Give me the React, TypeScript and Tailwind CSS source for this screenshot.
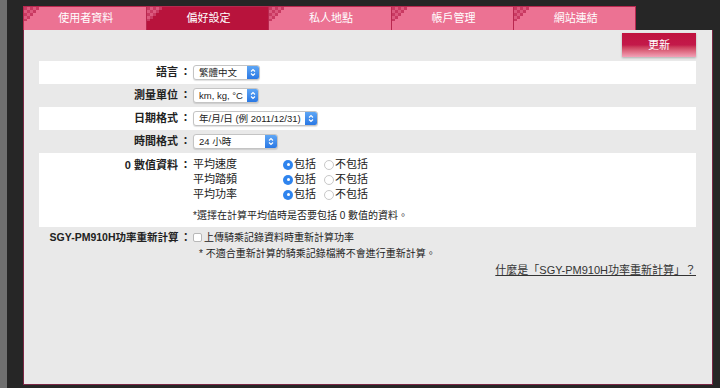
import React from 'react';

const FONT = { fontFamily: '"Liberation Sans", "Noto Sans CJK TC", sans-serif' };

const Checker: React.FC = () => (
  <svg width="16" height="14" viewBox="0 0 16 14" className="absolute left-0 top-0">
    {[
      [0, 0], [6, 0], [12, 0],
      [3, 3], [9, 3],
      [0, 6], [6, 6],
      [3, 9],
      [0, 12],
    ].map(([x, y], i) => (
      <rect key={i} x={x} y={y} width="3" height="3" fill="#c93a62" />
    ))}
    {[[3, 0], [9, 0], [0, 3], [6, 3], [3, 6], [0, 9]].map(([x, y], i) => (
      <rect key={'b' + i} x={x} y={y} width="3" height="3" fill="#dc5a7e" />
    ))}
  </svg>
);

const tabs = ['使用者資料', '偏好設定', '私人地點', '帳戶管理', '網站連結'];

const Select: React.FC<{ value: string; width: string }> = ({ value, width }) => (
  <div className={`${width} h-[15px] flex items-center rounded-[3px] bg-white border border-[#c4c4c4] shadow-[0_1px_1px_rgba(0,0,0,0.12)] overflow-hidden`}>
    <span className="flex-1 pl-[5px] pr-[4px] text-[9.5px] text-[#222] leading-none whitespace-nowrap">{value}</span>
    <span className="w-[12px] shrink-0 h-full bg-gradient-to-b from-[#5ea6f5] to-[#2a78e4] flex items-center justify-center">
      <svg width="6" height="9" viewBox="0 0 6 9" fill="none" stroke="white" strokeWidth="1.1">
        <path d="M1 3.5 L3 1.5 L5 3.5" />
        <path d="M1 5.5 L3 7.5 L5 5.5" />
      </svg>
    </span>
  </div>
);

const Radio: React.FC<{ on?: boolean }> = ({ on }) =>
  on ? (
    <span className="w-[10px] h-[10px] rounded-full bg-[#2f84ee] flex items-center justify-center">
      <span className="w-[3px] h-[3px] rounded-full bg-white" />
    </span>
  ) : (
    <span className="w-[10px] h-[10px] rounded-full bg-white border border-[#c8c8c8]" />
  );

const Row: React.FC<{ label: string; white?: boolean; children: React.ReactNode }> = ({ label, white, children }) => (
  <div className={`flex items-start ${white ? 'bg-white' : ''}`}>
    <div className="w-[152px] h-[23px] flex items-center justify-end text-[11px] font-bold text-[#222] whitespace-nowrap">
      {label}<span className="ml-[2px]">：</span>
    </div>
    <div className="pl-[2px]">{children}</div>
  </div>
);

const zeroRows = ['平均速度', '平均踏頻', '平均功率'];

export default function App() {
  return (
    <div className="w-[720px] h-[388px] bg-[#262626] flex overflow-hidden" style={FONT}>
      <div className="w-[7px] h-full bg-[#6f6f6f]" />
      <div className="ml-[16px] w-[690px] flex flex-col pt-[6px] pb-[3px]">
        {/* Tabs */}
        <div className="flex h-[24px]">
          {tabs.map((t, i) => (
            <div
              key={t}
              className={`relative w-[122.6px] h-full flex items-center justify-center text-[11px] text-white border-t border-l border-[#b8284f] ${
                i === 1 ? 'bg-[#b8133c]' : 'bg-[#ec7293]'
              } ${i === 4 ? 'border-r' : ''}`}
            >
              <Checker />
              <span className="relative pl-[2px]">{t}</span>
            </div>
          ))}
        </div>

        {/* Panel */}
        <div className="flex-1 bg-[#e9e9e9] border border-t-0 border-[#7a2745] pl-[15px] pr-[16px] pt-[3px]">
          <div className="flex justify-end">
            <button className="w-[74px] h-[24px] bg-gradient-to-b from-[#c0123e] via-[#c3194a] to-[#f2a2b8] text-white text-[11px] shadow-[0_1px_2px_rgba(0,0,0,0.25)]">
              更新
            </button>
          </div>

          <div className="mt-[4px] flex flex-col text-[#222]">
            <Row label="語言" white>
              <div className="h-[23px] flex items-center"><Select value="繁體中文" width="w-[67px]" /></div>
            </Row>
            <Row label="測量單位">
              <div className="h-[23px] flex items-center"><Select value="km, kg, °C" width="w-[66px]" /></div>
            </Row>
            <Row label="日期格式" white>
              <div className="h-[23px] flex items-center"><Select value="年/月/日 (例 2011/12/31)" width="w-auto" /></div>
            </Row>
            <Row label="時間格式">
              <div className="h-[23px] flex items-center"><Select value="24 小時" width="w-[85px]" /></div>
            </Row>

            <div className="flex items-start bg-white h-[74px]">
              <div className="w-[152px] pt-[4px] flex justify-end text-[11px] font-bold whitespace-nowrap">
                0 數值資料<span className="ml-[2px]">：</span>
              </div>
              <div className="pl-[2px] pt-[4px] text-[11px]">
                {zeroRows.map((r) => (
                  <div key={r} className="flex items-center h-[15px]">
                    <span className="w-[90px]">{r}</span>
                    <Radio on />
                    <span className="ml-[1px] w-[30px]">包括</span>
                    <Radio />
                    <span className="ml-[1px]">不包括</span>
                  </div>
                ))}
                <div className="mt-[6px] text-[10px]">*選擇在計算平均值時是否要包括 0 數值的資料。</div>
              </div>
            </div>

            <div className="flex items-start pt-[3px]">
              <div className="w-[152px] h-[15px] flex items-center justify-end text-[10.5px] font-bold whitespace-nowrap">
                SGY-PM910H功率重新計算<span className="ml-[2px]">：</span>
              </div>
              <div className="pl-[2px] text-[10px]">
                <div className="flex items-center h-[15px]">
                  <span className="w-[9px] h-[9px] bg-white border border-[#b8b8b8] rounded-[2px] mr-[2px]" />
                  上傳騎乘記錄資料時重新計算功率
                </div>
                <div className="pl-[6px] mt-[1px]">* 不適合重新計算的騎乘記錄檔將不會進行重新計算。</div>
              </div>
            </div>

            <div className="flex justify-end mt-[1px]">
              <span className="text-[11px] text-[#333] underline">什麼是「SGY-PM910H功率重新計算」？</span>
            </div>
          </div>
        </div>
      </div>
    </div>
  );
}
